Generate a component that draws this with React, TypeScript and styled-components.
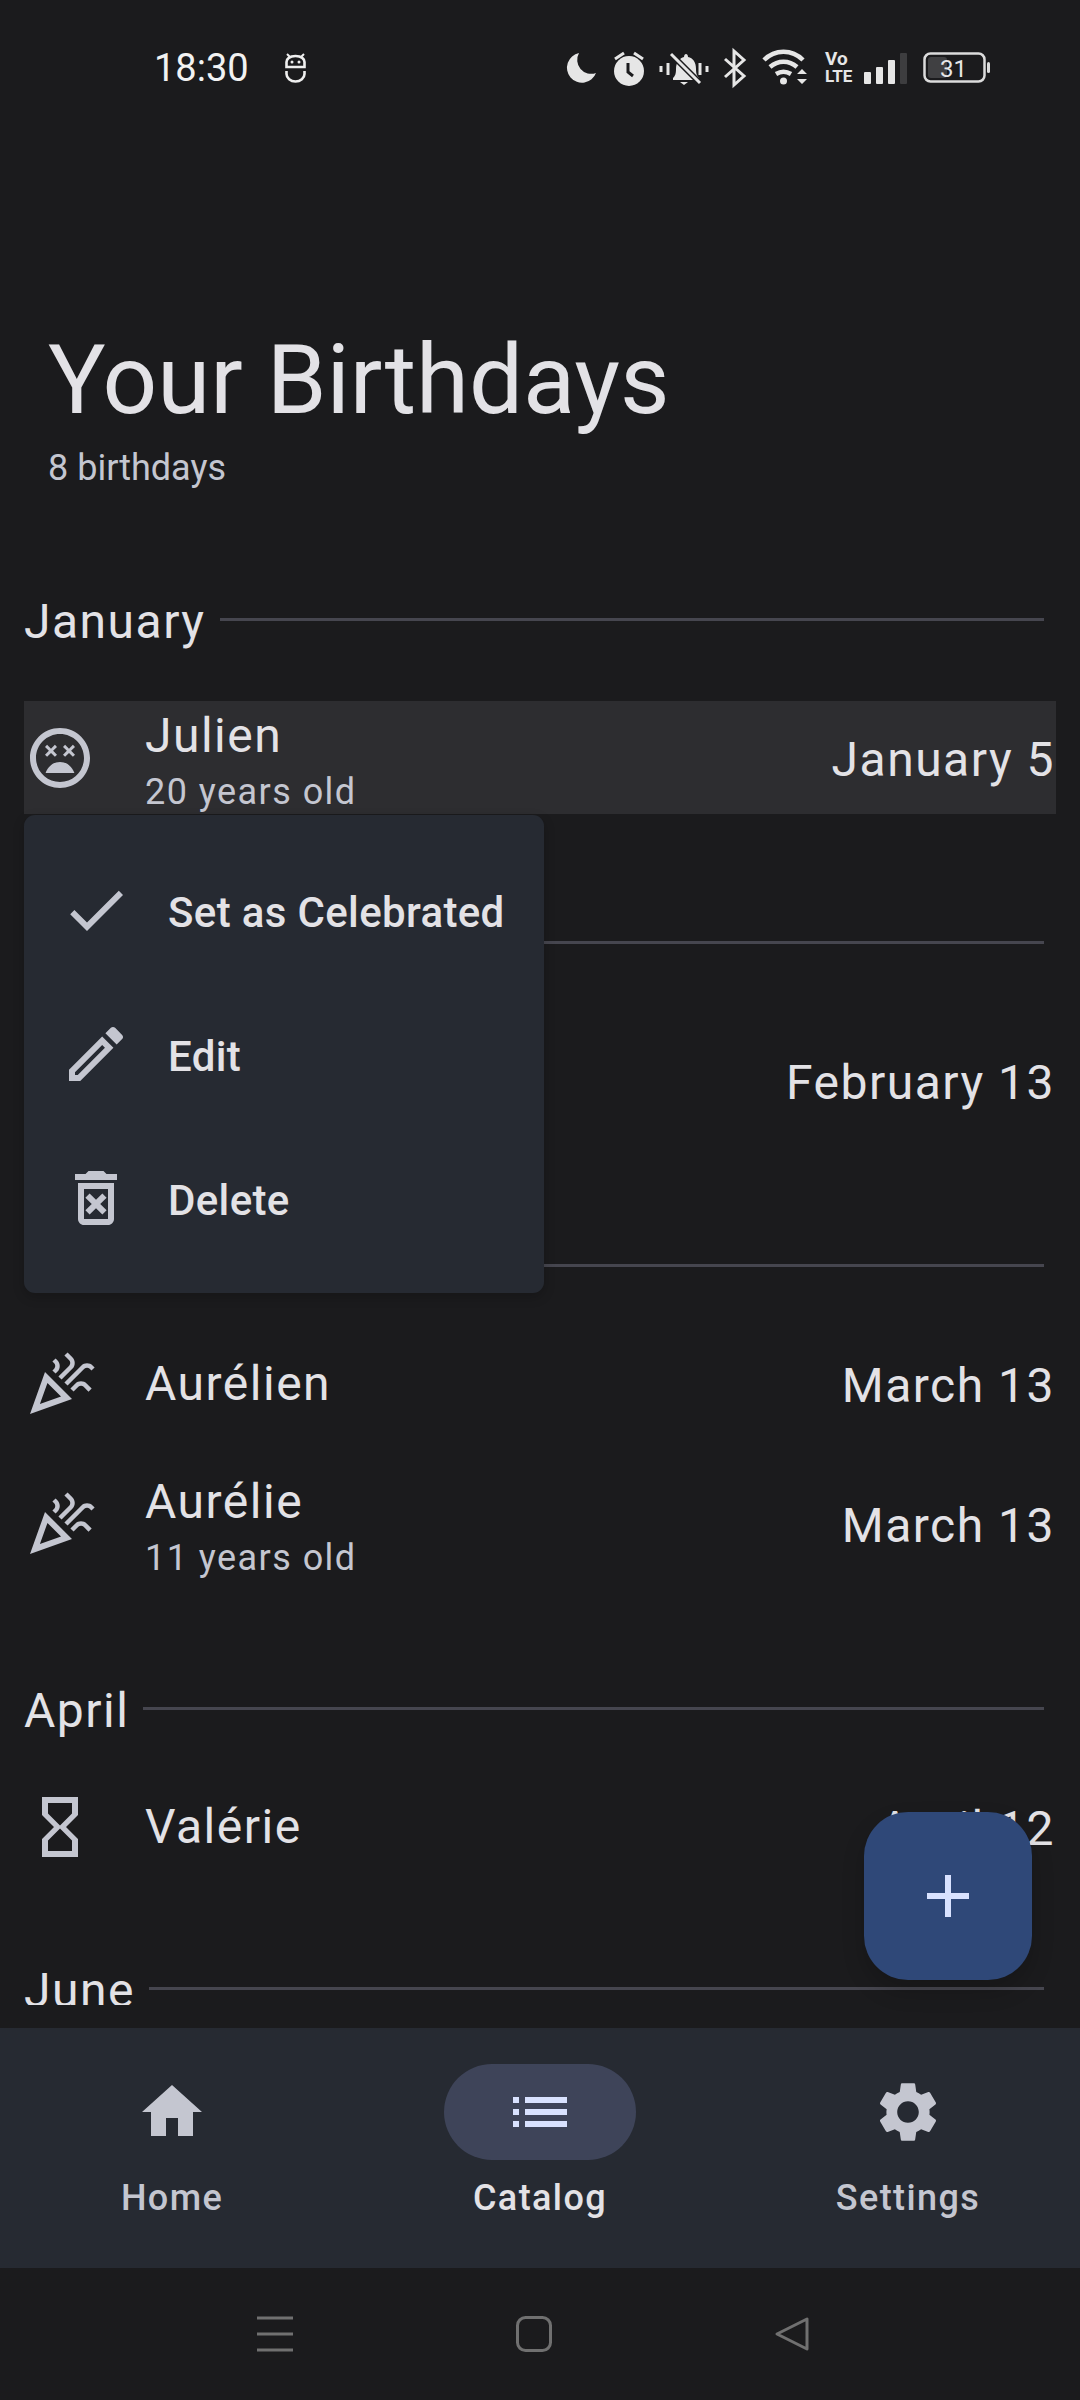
import React from "react";
import styled, { createGlobalStyle } from "styled-components";

const Global = createGlobalStyle`
  html, body { margin: 0; padding: 0; background: #1b1b1d; }
  * { box-sizing: border-box; }
`;

const Screen = styled.div`
  position: relative;
  width: 1080px;
  height: 2400px;
  overflow: hidden;
  background: #1b1b1d;
  color: #e3e2e6;
  font-family: Roboto, "Liberation Sans", sans-serif;
  display: flex;
  flex-direction: column;
`;

const StatusBar = styled.div`
  height: 110px;
  flex: none;
  display: flex;
  align-items: center;
  padding: 26px 0 0 154px;
`;
const Time = styled.span`
  font-size: 38px;
  color: #f2f2f2;
  width: 131px;
`;
const StatusIcons = styled.div`
  display: flex;
  align-items: center;
  gap: 16px;
  margin-left: 261px;
`;
const StatusSvg = styled.svg`
  display: block;
  overflow: visible;
  flex: none;
`;
const VoLteText = styled.text`
  font-family: Roboto, sans-serif;
  font-weight: 700;
  fill: #e6e6e6;
`;
const BatteryText = styled.text`
  font-family: Roboto, sans-serif;
  font-size: 24px;
  fill: #e6e6e6;
`;

const Content = styled.main`
  height: 1895px;
  flex: none;
  overflow: hidden;
  padding-top: 216px;
`;
const PageTitle = styled.h1`
  margin: 0 0 0 48px;
  font-size: 96px;
  line-height: 108px;
  font-weight: 400;
  letter-spacing: 0;
`;
const Subtitle = styled.div`
  margin: 12px 0 0 48px;
  font-size: 36px;
  line-height: 44px;
  color: #c4c6d0;
`;
const Section = styled.section<{ $tight?: boolean }>`
  padding: 0 24px;
  margin-bottom: ${p => (p.$tight ? "95px" : "99px")};
  &:first-of-type { margin-top: 100px; }
`;
const SectionHead = styled.div`
  height: 60px;
  margin-bottom: 51px;
  padding-right: 12px;
  display: flex;
  align-items: center;
  gap: 14px;
`;
const SectionName = styled.span`
  font-size: 48px;
  letter-spacing: 1.5px;
  line-height: 60px;
  padding-top: 4px;
`;
const SectionLine = styled.span`
  flex: 1;
  height: 3px;
  margin-top: -2px;
  background: #46464f;
`;
const Rows = styled.div`
  display: flex;
  flex-direction: column;
  gap: 46px;
`;
const Row = styled.div<{ $tall?: boolean; $active?: boolean }>`
  height: ${p => (p.$tall ? "113px" : "74px")};
  display: flex;
  align-items: center;
  background: ${p => (p.$active ? "#2d2d30" : "transparent")};
`;
const IconSvg = styled.svg<{ $size?: number }>`
  display: block;
  width: ${p => p.$size ?? 72}px;
  height: ${p => p.$size ?? 72}px;
  fill: currentColor;
  flex: none;
`;
const RowIcon = styled.span`
  width: 72px;
  height: 72px;
  flex: none;
  color: #c4c6d0;
`;
const RowText = styled.div<{ $two?: boolean }>`
  margin-left: 49px;
  flex: 1;
  min-width: 0;
  padding-top: ${p => (p.$two ? "12px" : "0")};
`;
const Name = styled.div`
  font-size: 48px;
  line-height: 56px;
  letter-spacing: 1.5px;
`;
const Age = styled.div`
  font-size: 36px;
  line-height: 56px;
  letter-spacing: 1.45px;
  color: #c4c6d0;
`;
const DateText = styled.div`
  font-size: 48px;
  letter-spacing: 1.5px;
  margin: 3px 1px 0 0;
`;

const Menu = styled.div`
  position: absolute;
  left: 24px;
  top: 815px;
  width: 520px;
  height: 478px;
  padding: 23px 0;
  background: #262a32;
  border-radius: 11px;
  box-shadow: 0 4px 12px rgba(0, 0, 0, 0.2);
`;
const MenuItem = styled.div`
  height: 144px;
  display: flex;
  align-items: center;
  padding-left: 36px;
`;
const MenuIcon = styled.span`
  color: #c4c6d0;
  width: 72px;
  height: 72px;
  flex: none;
`;
const MenuLabel = styled.span`
  margin: 4px 0 0 36px;
  font-size: 42px;
  font-weight: 500;
  letter-spacing: 0.35px;
`;

const Fab = styled.div`
  position: absolute;
  left: 864px;
  top: 1812px;
  width: 168px;
  height: 168px;
  border-radius: 44px;
  background: #2f4878;
  color: #d9e2ff;
  display: flex;
  align-items: center;
  justify-content: center;
  box-shadow: 0 11px 22px rgba(0, 0, 0, 0.18);
`;

const NavBar = styled.nav`
  margin-top: 23px;
  height: 240px;
  flex: none;
  background: #262a32;
  display: flex;
  justify-content: center;
  gap: 168px;
  padding-top: 36px;
`;
const NavItem = styled.div`
  width: 200px;
  display: flex;
  flex-direction: column;
  align-items: center;
`;
const NavPill = styled.div<{ $active?: boolean }>`
  width: 192px;
  height: 96px;
  border-radius: 48px;
  background: ${p => (p.$active ? "#3e4459" : "transparent")};
  color: ${p => (p.$active ? "#d9e2ff" : "#c4c6d0")};
  display: flex;
  align-items: center;
  justify-content: center;
`;
const NavLabel = styled.div<{ $active?: boolean }>`
  margin-top: 14px;
  font-size: 36px;
  line-height: 48px;
  font-weight: 500;
  letter-spacing: 1.4px;
  color: ${p => (p.$active ? "#e3e2e6" : "#c4c6d0")};
`;

const SystemBar = styled.div`
  height: 132px;
  flex: none;
  display: flex;
  align-items: center;
  padding: 0 0 0 257px;
  gap: 223px;
`;
const SysSvg = styled.svg`
  display: block;
  flex: none;
  overflow: visible;
`;

const P = {
  check: "M9 16.2L4.8 12l-1.4 1.4L9 19 21 7l-1.4-1.4L9 16.2z",
  edit: "M14.06 9.02l.92.92L5.92 19H5v-.92l9.06-9.06M17.66 3c-.25 0-.51.1-.7.29l-1.83 1.83 3.75 3.75 1.83-1.83c.39-.39.39-1.02 0-1.41l-2.34-2.34c-.2-.2-.45-.29-.71-.29zm-3.6 3.19L3 17.25V21h3.75L17.81 9.94l-3.75-3.75z",
  del: "M14.12 10.47L12 12.59l-2.13-2.12-1.41 1.41L10.59 14l-2.12 2.12 1.41 1.41L12 15.41l2.12 2.12 1.41-1.41L13.41 14l2.12-2.12zM15.5 4l-1-1h-5l-1 1H5v2h14V4zM6 19c0 1.1.9 2 2 2h8c1.1 0 2-.9 2-2V7H6v12zM8 9h8v10H8V9z",
  party: "M2 22l14-5-9-9-5 14zm10.35-5.82L5.3 18.7l2.52-7.05 4.53 4.53zM14.53 12.53l5.59-5.59c.49-.49 1.28-.49 1.77 0l.59.59 1.06-1.06-.59-.59c-1.07-1.07-2.82-1.07-3.89 0l-5.59 5.59 1.06 1.06zM10.06 6.88l-.59.59 1.06 1.06.59-.59c1.07-1.07 1.07-2.82 0-3.89l-.59-.59-1.06 1.06.59.59c.48.48.48 1.28 0 1.77zM17.06 11.88l-1.59 1.59 1.06 1.06 1.59-1.59c.49-.49 1.28-.49 1.77 0l1.61 1.61 1.06-1.06-1.61-1.61c-1.08-1.07-2.82-1.07-3.89 0zM15.06 5.88l-3.59 3.59 1.06 1.06 3.59-3.59c1.07-1.07 1.07-2.82 0-3.89l-1.59-1.59-1.06 1.06 1.59 1.59c.48.49.48 1.29 0 1.77z",
  hourglass: "M6 2v6h.01L6 8.01 10 12l-4 4 .01.01H6V22h12v-5.99h-.01L18 16l-4-4 4-3.99-.01-.01H18V2H6zm10 14.5V20H8v-3.5l4-4 4 4zm-4-5l-4-4V4h8v3.5l-4 4z",
  home: "M10 20v-6h4v6h5v-8h3L12 3 2 12h3v8z",
  list: "M3 13h2v-2H3v2zm0 4h2v-2H3v2zm0-8h2V7H3v2zm4 4h14v-2H7v2zm0 4h14v-2H7v2zM7 7v2h14V7H7z",
  gear: "M19.14 12.94c.04-.3.06-.61.06-.94 0-.32-.02-.64-.07-.94l2.03-1.58c.18-.14.23-.41.12-.61l-1.92-3.32c-.12-.22-.37-.29-.59-.22l-2.39.96c-.5-.38-1.03-.7-1.62-.94l-.36-2.54c-.04-.24-.24-.41-.48-.41h-3.84c-.24 0-.43.17-.47.41l-.36 2.54c-.59.24-1.13.57-1.62.94l-2.39-.96c-.22-.08-.47 0-.59.22L2.74 8.87c-.12.21-.08.47.12.61l2.03 1.58c-.05.3-.09.63-.09.94s.02.64.07.94l-2.03 1.58c-.18.14-.23.41-.12.61l1.92 3.32c.12.22.37.29.59.22l2.39-.96c.5.38 1.03.7 1.62.94l.36 2.54c.05.24.24.41.48.41h3.84c.24 0 .44-.17.47-.41l.36-2.54c.59-.24 1.13-.56 1.62-.94l2.39.96c.22.08.47 0 .59-.22l1.92-3.32c.12-.22.07-.47-.12-.61l-2.01-1.58zM12 15.6c-1.98 0-3.6-1.62-3.6-3.6s1.62-3.6 3.6-3.6 3.6 1.62 3.6 3.6-1.62 3.6-3.6 3.6z",
  dead: "M11.99 2C6.47 2 2 6.47 2 12s4.47 10 9.99 10S22 17.53 22 12 17.52 2 11.99 2zM12 20c-4.42 0-8-3.58-8-8s3.58-8 8-8 8 3.58 8 8-3.58 8-8 8zM7.200 17c.8-2.300 2.700-3.700 4.800-3.700s4 1.400 4.800 3.700z M7 8.300l.7-.7 1.300 1.300 1.300-1.300.7.7-1.300 1.300 1.300 1.300-.7.7-1.300-1.300-1.300 1.300-.7-.7 1.300-1.300z M13 8.300l.7-.7 1.300 1.300 1.300-1.300.7.7-1.300 1.300 1.300 1.300-.7.7-1.300-1.300-1.300 1.300-.7-.7 1.300-1.300z",
};

const Icon = ({ d, size }: { d: string; size?: number }) => (
  <IconSvg viewBox="0 0 24 24" $size={size}>
    <path d={d} />
  </IconSvg>
);

const StatusIconsRow = () => (
  <StatusIcons>
    <StatusSvg width="30" height="34" viewBox="0 0 30 34">
      <path d="M12 2 A15 15 0 1 0 29 22 A14 14 0 0 1 12 2z" fill="#e6e6e6" />
    </StatusSvg>
    <StatusSvg width="31" height="36" viewBox="0 0 31 36">
      <circle cx="16" cy="21" r="15" fill="#e6e6e6" />
      <path d="M15 13v9l5 4" fill="none" stroke="#1b1b1d" strokeWidth="3" />
      <path d="M2 9l9-6M30 9l-9-6" stroke="#e6e6e6" strokeWidth="3" />
    </StatusSvg>
    <StatusSvg width="47" height="36" viewBox="0 0 47 36">
      <path d="M13 28c2-2 3-4 3-9 0-7 4-11 8-12 0-4 4-4 4 0 5 1 8 5 8 12 0 5 1 7 3 9v2H13z" fill="#e6e6e6" />
      <path d="M20 32h8l-4 3z" fill="#e6e6e6" />
      <path d="M11 4l29 29" stroke="#1b1b1d" strokeWidth="6" />
      <path d="M11 4l29 29" stroke="#e6e6e6" strokeWidth="3" />
      <path d="M1 16v6M8 13v12M40 13v12M47 16v6" stroke="#e6e6e6" strokeWidth="3" />
    </StatusSvg>
    <StatusSvg width="24" height="36" viewBox="0 0 24 36">
      <path d="M2 9l19 17-10 9V1l10 9L2 27" fill="none" stroke="#e6e6e6" strokeWidth="3" />
    </StatusSvg>
    <StatusSvg width="46" height="36" viewBox="0 0 46 36">
      <path d="M1 10C12-1 29-1 40 10M7 17c8-7 19-7 27 0M13 24c5-3 10-3 15 0" fill="none" stroke="#e6e6e6" strokeWidth="4.5" />
      <circle cx="20.500" cy="31" r="3.500" fill="#e6e6e6" />
      <path d="M39 19l5 5H34zM39 34l5-5H34z" fill="#e6e6e6" />
    </StatusSvg>
    <StatusSvg width="23" height="36" viewBox="0 0 23 36">
      <VoLteText x="0" y="15" fontSize="19">Vo</VoLteText>
      <VoLteText x="0" y="32" fontSize="17">LTE</VoLteText>
    </StatusSvg>
    <StatusSvg width="43" height="32" viewBox="0 0 43 32">
      <rect x="0" y="20" width="7" height="12" rx="1" fill="#e6e6e6" />
      <rect x="12" y="15" width="7" height="17" rx="1" fill="#e6e6e6" />
      <rect x="24" y="8" width="7" height="24" rx="1" fill="#e6e6e6" />
      <rect x="36" y="1" width="7" height="31" rx="1" fill="#3d3d3f" />
    </StatusSvg>
    <StatusSvg width="67" height="32" viewBox="0 0 67 32">
      <rect x="1.500" y="1.500" width="60" height="28" rx="6" fill="none" stroke="#dcdcdc" strokeWidth="2.5" />
      <rect x="5" y="5" width="19" height="21" rx="3" fill="#404042" />
      <rect x="64" y="10" width="3" height="11" rx="1.500" fill="#dcdcdc" />
      <BatteryText x="17" y="25">31</BatteryText>
    </StatusSvg>
  </StatusIcons>
);

export default function App() {
  return (
    <Screen>
      <Global />
      <StatusBar>
        <Time>18:30</Time>
        <StatusSvg width="21" height="30" viewBox="0 0 21 30">
          <path d="M1.500 14V9c0-3 3-6 9-6s9 3 9 6v5h-18zM1.500 18v3c0 4 4 7.500 9 7.500s9-3.500 9-7.500v-3" fill="none" stroke="#efefef" strokeWidth="2.6" />
          <path d="M2 1l3 3M19 1l-3 3" stroke="#efefef" strokeWidth="2" />
          <circle cx="7" cy="9" r="1.500" fill="#efefef" />
          <circle cx="14" cy="9" r="1.500" fill="#efefef" />
        </StatusSvg>
        <StatusIconsRow />
      </StatusBar>

      <Content>
        <PageTitle>Your Birthdays</PageTitle>
        <Subtitle>8 birthdays</Subtitle>

        <Section>
          <SectionHead><SectionName>January</SectionName><SectionLine /></SectionHead>
          <Rows>
            <Row $tall $active>
              <RowIcon><Icon d={P.dead} /></RowIcon>
              <RowText $two><Name>Julien</Name><Age>20 years old</Age></RowText>
              <DateText>January 5</DateText>
            </Row>
          </Rows>
        </Section>

        <Section>
          <SectionHead><SectionName>February</SectionName><SectionLine /></SectionHead>
          <Rows>
            <Row $tall>
              <RowIcon />
              <RowText />
              <DateText>February 13</DateText>
            </Row>
          </Rows>
        </Section>

        <Section>
          <SectionHead><SectionName>March</SectionName><SectionLine /></SectionHead>
          <Rows>
            <Row>
              <RowIcon><Icon d={P.party} /></RowIcon>
              <RowText><Name>Aurélien</Name></RowText>
              <DateText>March 13</DateText>
            </Row>
            <Row $tall>
              <RowIcon><Icon d={P.party} /></RowIcon>
              <RowText $two><Name>Aurélie</Name><Age>11 years old</Age></RowText>
              <DateText>March 13</DateText>
            </Row>
          </Rows>
        </Section>

        <Section $tight>
          <SectionHead><SectionName>April</SectionName><SectionLine /></SectionHead>
          <Rows>
            <Row>
              <RowIcon><Icon d={P.hourglass} /></RowIcon>
              <RowText><Name>Valérie</Name></RowText>
              <DateText>April 12</DateText>
            </Row>
          </Rows>
        </Section>

        <Section>
          <SectionHead><SectionName>June</SectionName><SectionLine /></SectionHead>
        </Section>
      </Content>

      <NavBar>
        <NavItem>
          <NavPill><Icon d={P.home} /></NavPill>
          <NavLabel>Home</NavLabel>
        </NavItem>
        <NavItem>
          <NavPill $active><Icon d={P.list} /></NavPill>
          <NavLabel $active>Catalog</NavLabel>
        </NavItem>
        <NavItem>
          <NavPill><Icon d={P.gear} /></NavPill>
          <NavLabel>Settings</NavLabel>
        </NavItem>
      </NavBar>

      <SystemBar>
        <SysSvg width="36" height="36" viewBox="0 0 36 36">
          <path d="M0 2h36M0 18h36M0 34h36" stroke="#707070" strokeWidth="3" />
        </SysSvg>
        <SysSvg width="36" height="36" viewBox="0 0 36 36">
          <rect x="1.500" y="1.500" width="33" height="33" rx="8" fill="none" stroke="#707070" strokeWidth="3" />
        </SysSvg>
        <SysSvg width="34" height="36" viewBox="0 0 34 36">
          <path d="M32 3v30L2 18z" fill="none" stroke="#707070" strokeWidth="3" strokeLinejoin="round" />
        </SysSvg>
      </SystemBar>

      <Menu>
        <MenuItem>
          <MenuIcon><Icon d={P.check} /></MenuIcon>
          <MenuLabel>Set as Celebrated</MenuLabel>
        </MenuItem>
        <MenuItem>
          <MenuIcon><Icon d={P.edit} /></MenuIcon>
          <MenuLabel>Edit</MenuLabel>
        </MenuItem>
        <MenuItem>
          <MenuIcon><Icon d={P.del} /></MenuIcon>
          <MenuLabel>Delete</MenuLabel>
        </MenuItem>
      </Menu>

      <Fab>
        <IconSvg viewBox="0 0 42 42" $size={42}>
          <path d="M18 0h6v18h18v6H24v18h-6V24H0v-6h18z" />
        </IconSvg>
      </Fab>
    </Screen>
  );
}
